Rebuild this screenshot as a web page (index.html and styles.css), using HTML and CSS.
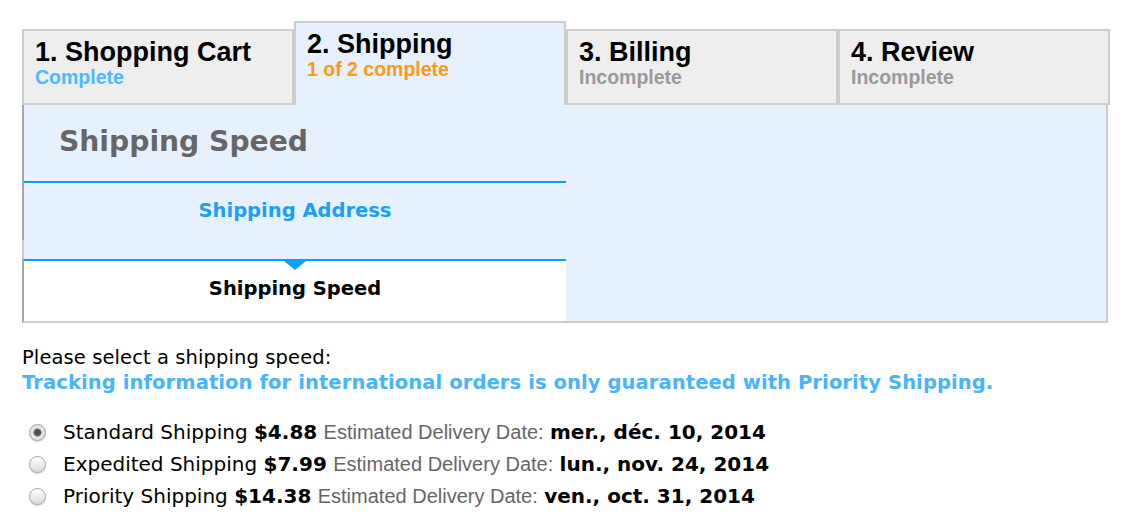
FILE: index.html
```html
<!DOCTYPE html>
<html lang="en">
<head>
<meta charset="utf-8">
<title>Checkout - Shipping</title>
<link rel="stylesheet" href="styles.css">
</head>
<body>
<div class="page">
  <div class="tabs">
    <div class="tab">
      <div class="tab-title">1. Shopping Cart</div>
      <div class="tab-status status-done">Complete</div>
    </div>
    <div class="tab tab-active">
      <div class="tab-title">2. Shipping</div>
      <div class="tab-status status-partial">1 of 2 complete</div>
    </div>
    <div class="tab">
      <div class="tab-title">3. Billing</div>
      <div class="tab-status">Incomplete</div>
    </div>
    <div class="tab">
      <div class="tab-title">4. Review</div>
      <div class="tab-status">Incomplete</div>
    </div>
  </div>

  <div class="panel">
    <div class="steps">
      <h2 class="steps-heading">Shipping Speed</h2>
      <div class="step step-address">Shipping Address</div>
      <div class="step step-current">Shipping Speed</div>
    </div>
    <div class="panel-fill"></div>
  </div>

  <p class="prompt">Please select a shipping speed:</p>
  <p class="notice">Tracking information for international orders is only guaranteed with Priority Shipping.</p>

  <ul class="options">
    <li class="option">
      <input class="radio" type="radio" name="speed" checked>
      <span class="option-text">Standard Shipping <b>$4.88</b> <span class="est">Estimated Delivery Date:</span> <b>mer., déc. 10, 2014</b></span>
    </li>
    <li class="option">
      <input class="radio" type="radio" name="speed">
      <span class="option-text">Expedited Shipping <b>$7.99</b> <span class="est">Estimated Delivery Date:</span> <b>lun., nov. 24, 2014</b></span>
    </li>
    <li class="option">
      <input class="radio" type="radio" name="speed">
      <span class="option-text">Priority Shipping <b>$14.38</b> <span class="est">Estimated Delivery Date:</span> <b>ven., oct. 31, 2014</b></span>
    </li>
  </ul>
</div>
</body>
</html>
```

FILE: styles.css
```css
html, body {
  margin: 0;
  padding: 0;
  background: #ffffff;
}

body {
  font-family: "DejaVu Sans", Verdana, sans-serif;
  color: #000;
}

.page {
  padding: 21px 0 0 22px;
}

/* ---------- tabs ---------- */
.tabs {
  display: flex;
  align-items: flex-end;
}

.tab {
  box-sizing: border-box;
  width: 272px;
  height: 76px;
  padding: 7px 11px 0 11px;
  background: #eeeeee;
  border: 2px solid #cccccc;
  font-family: "Liberation Sans", Arial, sans-serif;
  font-weight: bold;
}

.tab-active {
  height: 84px;
  background: #e7f1fd;
  border-bottom: none;
}

.tab-title {
  font-size: 27px;
  line-height: 28px;
  color: #000;
}

.tab-status {
  font-size: 19.5px;
  line-height: 22px;
  color: #9a9a9a;
}

.status-done {
  color: #4db8ff;
}

.status-partial {
  color: #ff9913;
}

/* ---------- panel ---------- */
.panel {
  box-sizing: border-box;
  width: 1086px;
  height: 218px;
  display: flex;
  background: #e7f1fd;
  border-left: 2px solid #a6a6a6;
  border-right: 2px solid #cccccc;
  border-bottom: 2px solid #cccccc;
}

.steps {
  width: 542px;
  display: flex;
  flex-direction: column;
}

.panel-fill {
  flex: 1;
}

.steps-heading {
  box-sizing: border-box;
  height: 76px;
  margin: 0;
  padding: 21px 0 0 35px;
  font-size: 28.2px;
  line-height: 32px;
  font-weight: bold;
  color: #666666;
}

.step {
  box-sizing: border-box;
  border-top: 2px solid #06a1fb;
  text-align: center;
  font-size: 19.5px;
  line-height: 24px;
  font-weight: bold;
  position: relative;
}

.step-address {
  height: 78px;
  padding-top: 16px;
  color: #1ba0f7;
}

.step-address::before {
  content: "";
  position: absolute;
  left: -2px;
  top: 57px;
  width: 2px;
  height: 19px;
  background: #cccccc;
}

.step-current {
  height: 62px;
  padding-top: 16px;
  background: #ffffff;
  color: #000;
}

.step-current::before {
  content: "";
  position: absolute;
  top: 0;
  left: 50%;
  margin-left: -11px;
  border-left: 11px solid transparent;
  border-right: 11px solid transparent;
  border-top: 9px solid #06a1fb;
}

/* ---------- text below ---------- */
.prompt,
.notice {
  margin: 0;
  font-size: 19.5px;
  line-height: 25px;
}

.prompt {
  margin-top: 22px;
  letter-spacing: 0.1px;
}

.notice {
  font-weight: bold;
  color: #48b4fc;
  letter-spacing: 0.1px;
}

.options {
  list-style: none;
  margin: 21px 0 0 0;
  padding: 0;
}

.option {
  display: flex;
  align-items: center;
  height: 32px;
  font-size: 20px;
  line-height: 32px;
}

.option b {
  font-weight: bold;
}

.est {
  font-family: "Liberation Sans", Arial, sans-serif;
  color: #666666;
}

.radio {
  -webkit-appearance: none;
  appearance: none;
  box-sizing: border-box;
  width: 17px;
  height: 17px;
  margin: 0 17px 0 7px;
  border-radius: 50%;
  border: 1px solid #a5a5a5;
  background: linear-gradient(#fdfdfd, #dcdcdc);
  box-shadow: 0 1px 1px rgba(0, 0, 0, 0.18);
  position: relative;
  flex: none;
}

.radio:checked {
  background: radial-gradient(circle, #4a4a4a 0, #555 3px, #8a8a8a 3.8px, #e8e8e8 4.5px, #d6d6d6 100%);
}
```
